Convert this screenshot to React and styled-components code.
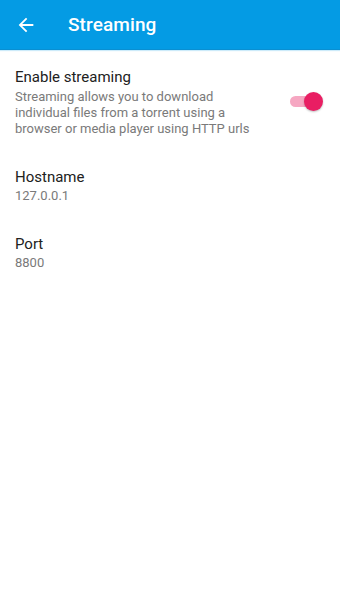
import React from 'react';
import styled, { createGlobalStyle } from 'styled-components';

const GlobalStyle = createGlobalStyle`
  html, body {
    margin: 0;
    padding: 0;
    background: #fff;
  }
  body {
    font-family: Roboto, "Noto Sans", sans-serif;
  }
`;

const Screen = styled.div`
  width: 340px;
  height: 614px;
  background: #fff;
  display: flex;
  flex-direction: column;
`;

const Toolbar = styled.header`
  height: 50px;
  background: #049be4;
  display: flex;
  align-items: center;
  padding-left: 15px;
  box-sizing: border-box;
  border-bottom: 1px solid #0a8fd2;
  box-shadow: 0 1px 1px rgba(3, 155, 229, 0.2);
`;

const BackButton = styled.button`
  width: 22px;
  height: 22px;
  padding: 0;
  border: 0;
  background: none;
  display: flex;
  align-items: center;
  justify-content: center;
  margin-right: 31px;
`;

const Title = styled.h1`
  margin: 0;
  color: #fff;
  font-size: 19px;
  font-weight: 500;
  letter-spacing: 0.1px;
`;

const PrefList = styled.ul`
  list-style-type: none;
  margin: 0;
  padding: 1px 0 0 0;
`;

const PrefItem = styled.li`
  display: flex;
  align-items: center;
  padding: 16px 15px 14px 15px;
`;

const PrefText = styled.div`
  flex: 1;
`;

const PrefTitle = styled.div`
  font-size: 15px;
  line-height: 20px;
  color: #212121;
`;

const PrefSummary = styled.div`
  max-width: 255px;
  font-size: 13px;
  line-height: 16px;
  color: #7a7a7a;
  margin-top: ${(p) => (p.$tight ? '2px' : '1px')};
`;

const Switch = styled.div`
  position: relative;
  width: 34px;
  height: 20px;
  margin-right: 1px;
  margin-top: -3px;
`;

const Track = styled.div`
  position: absolute;
  left: 0;
  top: 5px;
  width: 28px;
  height: 11px;
  border-radius: 6px;
  background: ${(p) => (p.$on ? '#f6a7c2' : '#bdbdbd')};
`;

const Thumb = styled.div`
  position: absolute;
  top: 1px;
  left: ${(p) => (p.$on ? '14px' : '0')};
  width: 19px;
  height: 19px;
  border-radius: 50%;
  background: ${(p) => (p.$on ? '#e91e63' : '#f1f1f1')};
  box-shadow: 0 1px 2px rgba(0, 0, 0, 0.25);
`;

const ArrowLeft = () => (
  <svg width="22" height="22" viewBox="0 0 24 24">
    <path
      d="M20 11H7.83l5.59-5.59L12 4l-8 8 8 8 1.41-1.41L7.83 13H20v-2z"
      fill="#fff"
    />
  </svg>
);

const App = () => (
  <Screen>
    <GlobalStyle />
    <Toolbar>
      <BackButton aria-label="Back">
        <ArrowLeft />
      </BackButton>
      <Title>Streaming</Title>
    </Toolbar>
    <PrefList>
      <PrefItem>
        <PrefText>
          <PrefTitle>Enable streaming</PrefTitle>
          <PrefSummary $tight>
            Streaming allows you to download individual files from a torrent
            using a browser or media player using HTTP urls
          </PrefSummary>
        </PrefText>
        <Switch>
          <Track $on />
          <Thumb $on />
        </Switch>
      </PrefItem>
      <PrefItem>
        <PrefText>
          <PrefTitle>Hostname</PrefTitle>
          <PrefSummary>127.0.0.1</PrefSummary>
        </PrefText>
      </PrefItem>
      <PrefItem>
        <PrefText>
          <PrefTitle>Port</PrefTitle>
          <PrefSummary>8800</PrefSummary>
        </PrefText>
      </PrefItem>
    </PrefList>
  </Screen>
);

export default App;
